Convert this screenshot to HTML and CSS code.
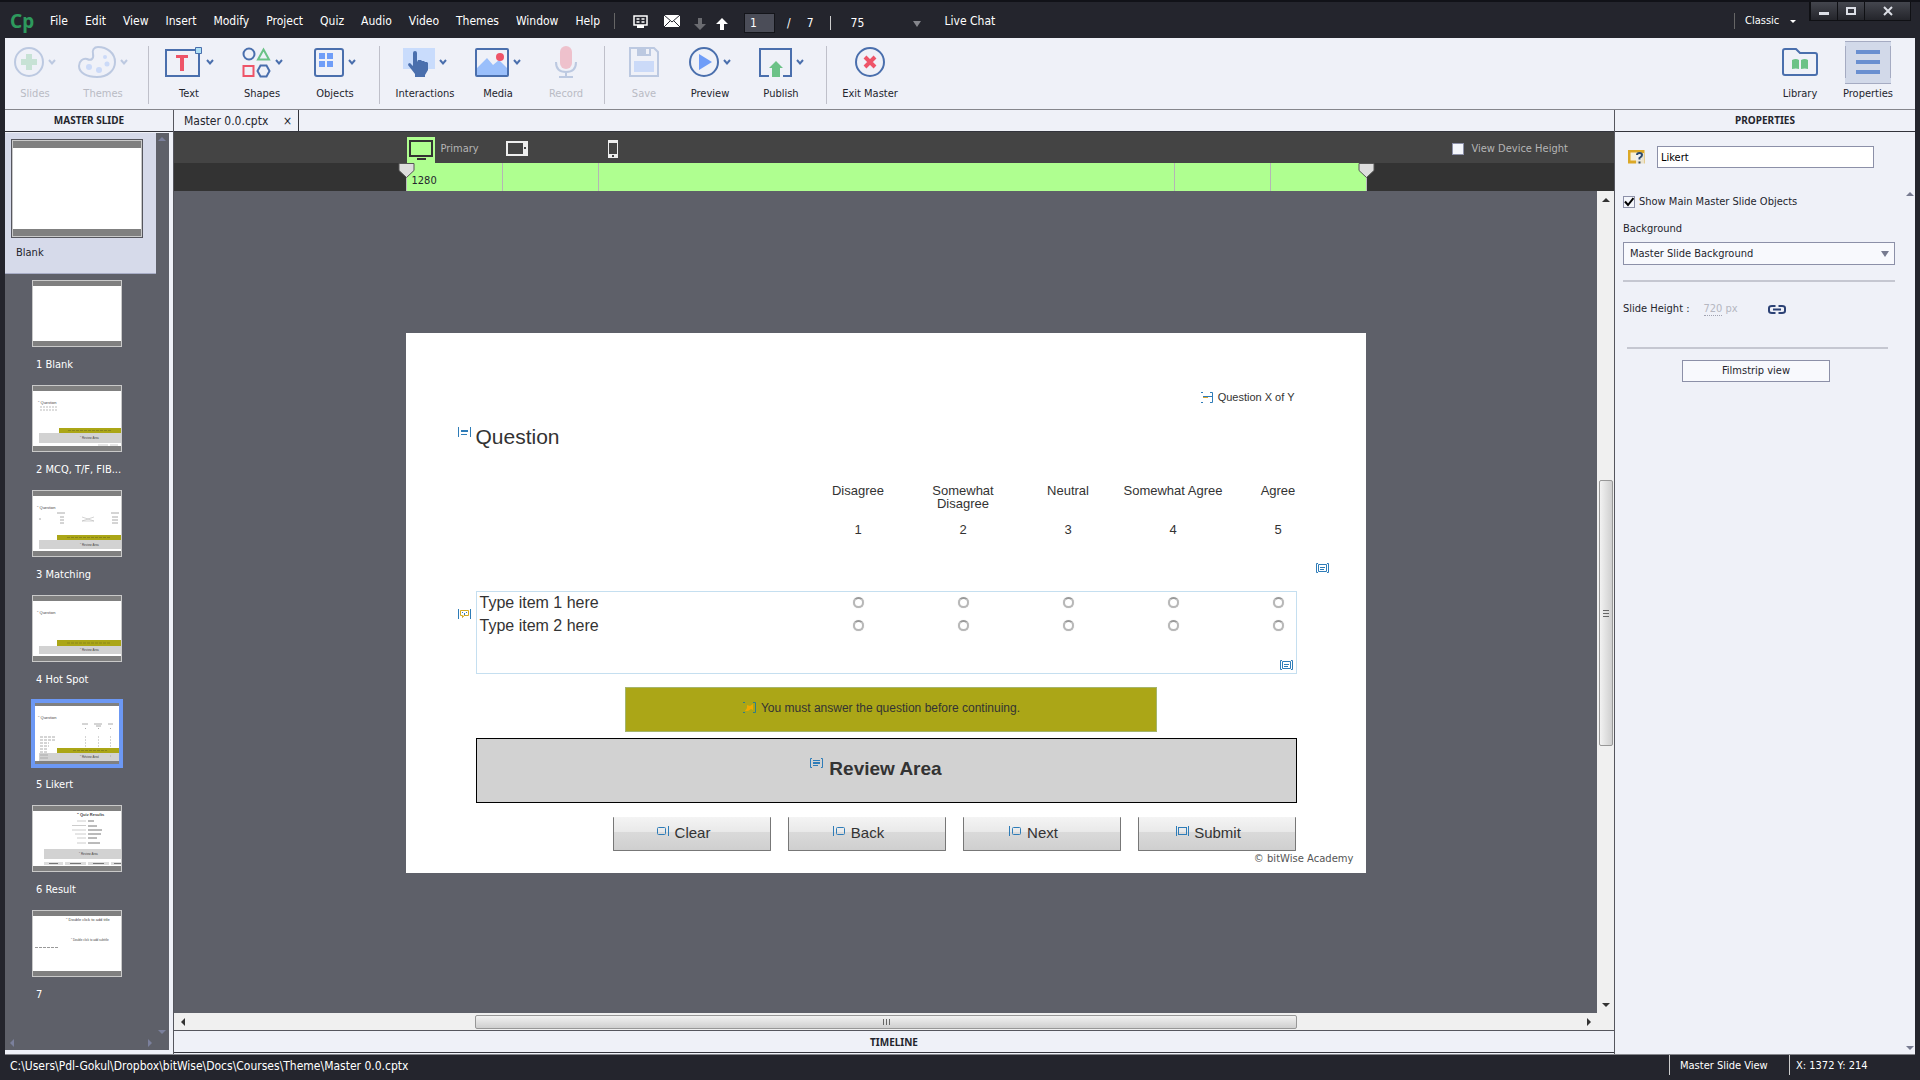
FILE: index.html
```html
<!DOCTYPE html>
<html lang="en">
<head>
    <meta charset="UTF-8">
    <meta name="viewport" content="width=device-width, initial-scale=1.0">
    <title>Master 0.0.cptx</title>
    <link rel="stylesheet" href="styles.css">
</head>
<body>
    <!-- shared icons -->
    <svg class="sprite" aria-hidden="true">
        <symbol id="caret" viewBox="0 0 8 8"><path d="M1 2l3 3.4L7 2" fill="none" stroke="#4a6fad" stroke-width="2"/></symbol>
        <symbol id="marker" viewBox="0 0 17 28"><path d="M8.500 14V28" stroke="#bbb"/><path d="M1 .5h15v7l-7.500 7L1 7.500z" fill="#ddd" stroke="#555"/></symbol>
        <symbol id="caption" viewBox="0 0 13 10"><path d="M.5 0v10M12.500 0v10M3 3.500h7M3 4.500h7M3 7.500h6" fill="none" stroke="#2e7cb8"/></symbol>
        <symbol id="caption-box" viewBox="0 0 13 10"><path d="M2 .5H.5v9H2M11 .5h1.500v9H11M2.500 1.500h8v7h-8zM4 4.500h5M4 6.500h4" fill="none" stroke="#2e7cb8"/></symbol>
    </svg>

    <header class="menubar">
        <span class="logo">Cp</span>
        <nav class="menu">
            <a href="#">File</a>
            <a href="#">Edit</a>
            <a href="#">View</a>
            <a href="#">Insert</a>
            <a href="#">Modify</a>
            <a href="#">Project</a>
            <a href="#">Quiz</a>
            <a href="#">Audio</a>
            <a href="#">Video</a>
            <a href="#">Themes</a>
            <a href="#">Window</a>
            <a href="#">Help</a>
        </nav>
        <div class="quick">
            <button class="bare" aria-label="Layout"><svg width="15" height="13"><path d="M1 1h13v9H1zM3.500 4h3M8.500 4h3M3.500 7h3M8.500 7h3" fill="none" stroke="#fff" stroke-width="1.500"/><path d="M4 10h7v3H4z" fill="#fff"/></svg></button>
            <button class="bare" aria-label="Mail"><svg width="16" height="12"><path d="M0 0h16v12H0z" fill="#fff"/><path d="M0 0l8 7 8-7M0 12l6-6M16 12l-6-6" fill="none" stroke="#24252d"/></svg></button>
            <div class="arrows">
                <button class="bare" aria-label="Next slide"><svg width="12" height="12"><path d="M4 0h4v6h4l-6 6-6-6h4z" fill="#6a6b70"/></svg></button>
                <button class="bare" aria-label="Previous slide"><svg width="12" height="12"><path d="M4 12h4V6h4L6 0 0 6h4z" fill="#fff"/></svg></button>
            </div>
            <input class="page-box" type="text" value="1" aria-label="Slide number">
            <span class="slash">/</span>
            <span class="total">7</span>
            <span class="pipe"></span>
            <span class="zoom-box">
                <select aria-label="Zoom"><option>75</option></select>
            </span>
            <a href="#">Live Chat</a>
        </div>
        <div class="workspace">
            <select aria-label="Workspace"><option>Classic</option></select>
        </div>
        <div class="window-buttons">
            <button aria-label="Minimize"><svg width="10" height="12"><path d="M0 7h10v3H0z" fill="#dcdfe6"/></svg></button>
            <button aria-label="Maximize"><svg width="10" height="12"><path d="M1 3h8v6H1z" fill="none" stroke="#dcdfe6" stroke-width="2"/></svg></button>
            <button class="close" aria-label="Close"><svg width="10" height="12"><path d="M1 2l8 8M9 2l-8 8" stroke="#dcdfe6" stroke-width="2"/></svg></button>
        </div>
    </header>

    <div class="toolbar">
        <div class="group">
            <button class="tool narrow" disabled>
                <span class="icons">
                    <svg width="30" height="32"><circle cx="15" cy="16" r="14" fill="none" stroke="#4a6fad" stroke-width="2"/><path d="M12 8h6v5h5v6h-5v5h-6v-5H7v-6h5z" fill="#6cc287"/></svg>
                    <svg class="caret"><use href="#caret"/></svg>
                </span>
                Slides
            </button>
            <button class="tool" disabled>
                <span class="icons">
                    <svg width="38" height="32"><path d="M15 8c-1-4 1-7 5-7 9 0 17 6 17 15s-8 15-18 15S1 27 1 20c0-5 4-8 8-7 4 2 7 0 6-5z" fill="none" stroke="#4a6fad" stroke-width="2"/><circle cx="11" cy="21" r="3" fill="#7ba6fb"/><circle cx="21" cy="24" r="3" fill="#7ba6fb"/><circle cx="29" cy="18" r="2.500" fill="#7ba6fb"/><circle cx="27" cy="11" r="2" fill="#7ba6fb"/></svg>
                    <svg class="caret"><use href="#caret"/></svg>
                </span>
                Themes
            </button>
        </div>
        <div class="group group-insert">
            <button class="tool">
                <span class="icons">
                    <svg width="37" height="32"><path d="M1 4h33v26H1z" fill="none" stroke="#4a6fad" stroke-width="2"/><path d="M11 9h12v3h-4v13h-4V12h-4z" fill="#ee5468"/><path d="M30.500 1.500h6v6h-6z" fill="#aee0f5" stroke="#4a6fad"/></svg>
                    <svg class="caret"><use href="#caret"/></svg>
                </span>
                Text
            </button>
            <button class="tool">
                <span class="icons">
                    <svg width="29" height="32" fill="none" stroke-width="2"><circle cx="7" cy="8" r="5.500" stroke="#4a6fad"/><path d="M21.500 3.500l5.500 10H16z" stroke="#6cc287"/><path d="M1.500 20h10v10h-10z" stroke="#ee5468"/><path d="M18.500 19.500h6l3 5.500-3 5.500h-6l-3-5.500z" stroke="#4a6fad"/></svg>
                    <svg class="caret"><use href="#caret"/></svg>
                </span>
                Shapes
            </button>
            <button class="tool">
                <span class="icons">
                    <svg width="30" height="32"><rect x="1" y="3" width="28" height="27" rx="2" fill="none" stroke="#4a6fad" stroke-width="2"/><path d="M5 7h6v6H5zM13 7h6v6h-6zM5 15h6v6H5zM13 15h6v6h-6z" fill="#6f9df8"/></svg>
                    <svg class="caret"><use href="#caret"/></svg>
                </span>
                Objects
            </button>
        </div>
        <div class="group group-media">
            <button class="tool">
                <span class="icons">
                    <svg width="32" height="32"><path d="M0 2h32v21H0z" fill="#c9dcfc"/><path d="M10 7q0-2 2-2t2 2v9l1-2h3l1 1h2l1 1h2l1 1v7l-3 5v2H12v-3l-7-9q0-2 2-2l3 3z" fill="#4a6fad"/></svg>
                    <svg class="caret"><use href="#caret"/></svg>
                </span>
                Interactions
            </button>
            <button class="tool">
                <span class="icons">
                    <svg width="34" height="32"><path d="M2 29V22l10-10 6 7 6-5 8 8v7z" fill="#9abffb"/><rect x="1" y="3" width="32" height="27" rx="1" fill="none" stroke="#4a6fad" stroke-width="2"/><circle cx="25" cy="11" r="4" fill="#ee5468"/></svg>
                    <svg class="caret"><use href="#caret"/></svg>
                </span>
                Media
            </button>
            <button class="tool narrow" disabled>
                <span class="icons">
                    <svg width="22" height="32"><rect x="5" y="0" width="12" height="23" rx="6" fill="#ee5468"/><path d="M1 16c0 7 4 10 10 10s10-3 10-10M11 26v5M4 31h14" fill="none" stroke="#4a6fad" stroke-width="2"/></svg>
                </span>
                Record
            </button>
        </div>
        <div class="group group-file">
            <button class="tool narrow" disabled>
                <span class="icons">
                    <svg width="30" height="32"><path d="M1 2h24l4 4v24H1z" fill="none" stroke="#4a6fad" stroke-width="2"/><path d="M8 2h14v8H8z" fill="#4a6fad"/><path d="M17 3h3v5h-3z" fill="#eff1f8"/><path d="M5 15h20v11H5z" fill="#7ba6fb"/></svg>
                </span>
                Save
            </button>
            <button class="tool">
                <span class="icons">
                    <svg width="30" height="32"><circle cx="15" cy="16" r="14" fill="none" stroke="#4a6fad" stroke-width="2"/><path d="M10 8l13 8-13 8z" fill="#6f9df8"/></svg>
                    <svg class="caret"><use href="#caret"/></svg>
                </span>
                Preview
            </button>
            <button class="tool">
                <span class="icons">
                    <svg width="33" height="32"><path d="M10 30H1V3h31v27h-8" fill="none" stroke="#4a6fad" stroke-width="2"/><path d="M13 31V22H10l7-7 7 7h-3v9z" fill="#6cc287"/></svg>
                    <svg class="caret"><use href="#caret"/></svg>
                </span>
                Publish
            </button>
        </div>
        <div class="group group-exit">
            <button class="tool">
                <span class="icons">
                    <svg width="30" height="32"><circle cx="15" cy="16" r="14" fill="none" stroke="#4a6fad" stroke-width="2"/><path d="M10 11l10 10M20 11L10 21" stroke="#ee5468" stroke-width="4"/></svg>
                </span>
                Exit Master
            </button>
        </div>
        <div class="group group-panels">
            <button class="tool narrow">
                <span class="icons">
                    <svg width="36" height="32"><path d="M3 3h11l4 4h15q2 0 2 2v18q0 2-2 2H3q-2 0-2-2V5q0-2 2-2z" fill="none" stroke="#4a6fad" stroke-width="2"/><path d="M10 14q4-2 7 0v9q-3-1-7 0zM19 14q4-2 7 0v9q-3-1-7 0z" fill="#6cc287"/></svg>
                </span>
                Library
            </button>
            <button class="tool">
                <span class="icons active">
                    <svg width="26" height="32"><path d="M1 6h24M1 16h24M1 26h24" stroke="#6a8fd0" stroke-width="4"/></svg>
                </span>
                Properties
            </button>
        </div>
    </div>

    <div class="main">
        <aside class="filmstrip">
            <h2 class="panel-title">MASTER SLIDE</h2>
            <div class="strip">
                <div class="master">
                    <div class="thumb"></div>
                    <span class="name">Blank</span>
                </div>
                <ol class="slides">
                    <li>
                        <div class="thumb"></div>
                        <span class="name">1 Blank</span>
                    </li>
                    <li>
                        <div class="thumb"><svg viewBox="0 0 88 55"><text x="5" y="13" font-size="4">" Question</text><path d="M7 16h17M7 19h17" stroke="#bbb" stroke-dasharray="2 1"/><path d="M26 37h62v5H26z" fill="#aba617"/><path d="M35 39.500h43" stroke="#8a861a" stroke-dasharray="3 1"/><path d="M6 42h82v10H6z" fill="#d2d2d2"/><text x="47" y="48" font-size="3">" Review Area</text><path d="M65 54h10M77 54h8" stroke="#ccc"/></svg></div>
                        <span class="name">2 MCQ, T/F, FIB...</span>
                    </li>
                    <li>
                        <div class="thumb"><svg viewBox="0 0 88 55"><text x="4" y="13" font-size="4">" Question</text><path d="M24 17h8M78 17h8M27 21h4M27 24h4M27 27h4M79 21h6M79 24h6M79 27h6M6 23h2" stroke="#aaa"/><path d="M49 21l12 4M49 25l12-4M49 25h12" stroke="#aaa" stroke-width=".5"/><path d="M24 39h64v5H24z" fill="#aba617"/><path d="M34 41.500h44" stroke="#8a861a" stroke-dasharray="3 1"/><path d="M6 44h82v9H6z" fill="#d2d2d2"/><text x="47" y="50" font-size="3">" Review Area</text></svg></div>
                        <span class="name">3 Matching</span>
                    </li>
                    <li>
                        <div class="thumb"><svg viewBox="0 0 88 55"><text x="4" y="13" font-size="4">" Question</text><path d="M24 39h64v6H24z" fill="#aba617"/><path d="M34 42h44" stroke="#8a861a" stroke-dasharray="3 1"/><path d="M6 45h82v8H6z" fill="#d2d2d2"/><text x="47" y="50" font-size="3">" Review Area</text></svg></div>
                        <span class="name">4 Hot Spot</span>
                    </li>
                    <li>
                        <div class="thumb current"><svg viewBox="0 0 88 55"><text x="5" y="13" font-size="4">" Question</text><path d="M49 18h6M61 18h8M63 20h5M75 18h5M52 22.500h1M65 22.500h1M77 22.500h1" stroke="#aaa"/><path d="M7 31h15M7 34h15M7 37h9M7 40h9M7 43h8M7 46h8" stroke="#aaa" stroke-dasharray="3 1"/><path d="M52 31h1M52 34h1M52 37h1M52 40h1M65 31h1M65 34h1M65 37h1M65 40h1M77 31h1M77 34h1M77 37h1M77 40h1" stroke="#aaa"/><path d="M24 42h64v5H24z" fill="#aba617"/><path d="M40 44.500h34" stroke="#8a861a" stroke-dasharray="3 1"/><path d="M6 47h82v8H6z" fill="#d2d2d2"/><path d="M7 49h8M7 52h8M52 50h1M65 50h1M77 50h1" stroke="#aaa"/><text x="47" y="52" font-size="3">" Review Area</text></svg></div>
                        <span class="name">5 Likert</span>
                    </li>
                    <li>
                        <div class="thumb"><svg viewBox="0 0 88 55"><text x="44" y="5" font-size="4" font-weight="bold">" Quiz Results</text><path d="M44 10h9M39 14.500h14M39 19h14M42 23h11M44 27h9M44 32h9" stroke="#ccc"/><path d="M55 10h6M55 15h9M55 19h14M55 23h13M55 27h9M55 32h12" stroke="#777"/><path d="M11 38h77v10H11z" fill="#d2d2d2"/><text x="46" y="44" font-size="3">" Review Area</text><path d="M11 51h19v3H11zM32 51h21v3H32zM55 51h21v3H55zM78 51h10v3H78z" fill="#ddd"/><path d="M16 52.500h9M37 52.500h11M60 52.500h11M81 52.500h7" stroke="#777"/></svg></div>
                        <span class="name">6 Result</span>
                    </li>
                    <li>
                        <div class="thumb"><svg viewBox="0 0 88 55"><text x="33" y="5" font-size="4">" Double click to add title</text><text x="38" y="25" font-size="3">" Double click to add subtitle</text><path d="M2 31.500h23" stroke="#999" stroke-dasharray="3 1"/></svg></div>
                        <span class="name">7</span>
                    </li>
                </ol>
                <span class="tri up strip-up"></span>
                <span class="tri down strip-down"></span>
                <span class="tri left strip-left"></span>
                <span class="tri right strip-right"></span>
            </div>
        </aside>

        <main class="center">
            <div class="tabs">
                <div class="tab">Master 0.0.cptx <button class="bare" aria-label="Close tab">×</button></div>
            </div>
            <div class="devices">
                <div class="device-list">
                    <button class="bare device-primary" aria-label="Desktop"><svg width="28" height="27"><path d="M3 4h22v15H3z" fill="none" stroke="#333" stroke-width="2"/><path d="M10 22h9" stroke="#333" stroke-width="2"/></svg></button>
                    <span class="device-name">Primary</span>
                    <button class="bare" aria-label="Tablet"><svg width="22" height="15"><path d="M1 1h20v13H1z" fill="none" stroke="#eee" stroke-width="2"/><path d="M17 0h5v15h-5z" fill="#eee"/><path d="M18 6h2v2h-2z" fill="#444"/></svg></button>
                    <button class="bare device-phone" aria-label="Phone"><svg width="10" height="18"><path d="M0 0h10v18H0z" fill="#eee"/><path d="M1 3h8v11H1zM4 15h2v2H4z" fill="#444"/></svg></button>
                </div>
                <label class="check device-height"><input type="checkbox"> View Device Height</label>
            </div>
            <div class="ruler">
                <div class="ruler-scale">
                    <span>1280</span><span></span><span></span><span></span><span></span>
                    <svg class="marker marker-start"><use href="#marker"/></svg>
                    <svg class="marker marker-end"><use href="#marker"/></svg>
                </div>
            </div>

            <div class="canvas">
                <div class="stage">
                    <article class="slide">
                        <p class="progress"><svg width="12" height="11"><path d="M2 .5H0M2 10.500H0M9 .5h2.500v10H9M2 4.500h9" fill="none" stroke="#2e7cb8"/><path d="M2 5.500h5" stroke="#e0a82e"/></svg> Question X of Y</p>
                        <h1 class="question"><svg class="badge badge-question"><use href="#caption"/></svg>Question</h1>
                        <div class="likert">
                            <svg class="badge badge-correct"><use href="#caption-box"/></svg>
                            <svg class="badge badge-smile" viewBox="0 0 13 10"><path d="M.5 0v10M12.500 0v10" stroke="#2e7cb8"/><path d="M2.500 1.500h8v5H6L4.500 8.500v-2h-2z" fill="none" stroke="#d2a921"/><path d="M4 3h1v1H4zM8 3h1v1H8zM6 4h1v2H6z" fill="#2e7cb8"/></svg>
                            <div class="likert-frame"><svg class="badge badge-hint"><use href="#caption-box"/></svg></div>
                            <table>
                                <thead>
                                    <tr class="labels">
                                        <th></th>
                                        <th scope="col">Disagree</th>
                                        <th scope="col">Somewhat<br>Disagree</th>
                                        <th scope="col">Neutral</th>
                                        <th scope="col">Somewhat Agree</th>
                                        <th scope="col">Agree</th>
                                    </tr>
                                    <tr class="scores">
                                        <td></td>
                                        <td>1</td>
                                        <td>2</td>
                                        <td>3</td>
                                        <td>4</td>
                                        <td>5</td>
                                    </tr>
                                </thead>
                                <tbody>
                                    <tr>
                                        <th scope="row">Type item 1 here</th>
                                        <td><input type="radio" name="item1" aria-label="Item 1: Disagree"></td>
                                        <td><input type="radio" name="item1" aria-label="Item 1: Somewhat Disagree"></td>
                                        <td><input type="radio" name="item1" aria-label="Item 1: Neutral"></td>
                                        <td><input type="radio" name="item1" aria-label="Item 1: Somewhat Agree"></td>
                                        <td><input type="radio" name="item1" aria-label="Item 1: Agree"></td>
                                    </tr>
                                    <tr>
                                        <th scope="row">Type item 2 here</th>
                                        <td><input type="radio" name="item2" aria-label="Item 2: Disagree"></td>
                                        <td><input type="radio" name="item2" aria-label="Item 2: Somewhat Disagree"></td>
                                        <td><input type="radio" name="item2" aria-label="Item 2: Neutral"></td>
                                        <td><input type="radio" name="item2" aria-label="Item 2: Somewhat Agree"></td>
                                        <td><input type="radio" name="item2" aria-label="Item 2: Agree"></td>
                                    </tr>
                                </tbody>
                            </table>
                        </div>
                        <p class="warning"><svg width="13" height="11"><path d="M2 .5H0M2 10.500H0M10 .5h2.500v10H10" fill="none" stroke="#2e7c88"/><path d="M2 9l2-3V3l3 1 3-2v6L8 7 5 9z" fill="#f0a800"/></svg> You must answer the question before continuing.</p>
                        <div class="review"><svg width="13" height="10"><path d="M2 .5H.5v9H2M11 .5h1.500v9H11M3 2.500h7M3 4.500h7M3 5.500h7M3 7.500h5" fill="none" stroke="#2e7cb8"/></svg> Review Area</div>
                        <div class="buttons">
                            <button><svg width="13" height="10"><rect x=".5" y="1.500" width="8" height="7" rx="1" fill="none" stroke="#2e7cb8"/><path d="M11.500 0v10" stroke="#2e7cb8"/></svg> Clear</button>
                            <button><svg width="13" height="10"><rect x="3.500" y="1.500" width="8" height="7" rx="1" fill="none" stroke="#2e7cb8"/><path d="M.5 0v10" stroke="#2e7cb8"/></svg> Back</button>
                            <button><svg width="13" height="10"><rect x="3.500" y="1.500" width="8" height="7" rx="1" fill="none" stroke="#2e7cb8"/><path d="M.5 0v10" stroke="#2e7cb8"/></svg> Next</button>
                            <button><svg width="13" height="10"><rect x="2.500" y="1.500" width="8" height="7" fill="none" stroke="#2e7cb8"/><path d="M.5 0v10M12.500 0v10" stroke="#2e7cb8"/></svg> Submit</button>
                        </div>
                        <p class="copyright">© bitWise Academy</p>
                    </article>
                </div>
                <div class="scroll-y">
                    <span class="tri up"></span>
                    <span class="thumb-y"></span>
                    <span class="tri down"></span>
                </div>
                <div class="scroll-x">
                    <span class="tri left"></span>
                    <span class="thumb-x"></span>
                    <span class="tri right"></span>
                </div>
            </div>
            <h2 class="panel-title timeline">TIMELINE</h2>
        </main>

        <aside class="properties">
            <h2 class="panel-title">PROPERTIES</h2>
            <form class="props">
                <div class="name-row">
                    <svg width="17" height="14"><path d="M1 1h14v11H1z" fill="#f6f1dc" stroke="#dba827" stroke-width="3"/><path d="M8 3h8v11H8z" fill="#eff1f8" fill-opacity=".8"/><path d="M9 5q0-2 2.500-2t2.500 2q0 1.500-2.500 3v1.500M11.500 11.500v2" fill="none" stroke="#2c4a6c" stroke-width="2"/></svg>
                    <input class="slide-name" type="text" value="Likert" aria-label="Slide name">
                </div>
                <label class="check"><input type="checkbox" checked> Show Main Master Slide Objects</label>
                <label class="field-label" for="background">Background</label>
                <div class="select-box">
                    <select id="background"><option>Master Slide Background</option></select>
                </div>
                <hr>
                <div class="height-row">
                    <span>Slide Height :</span>
                    <span class="px"><u>720</u> px</span>
                    <button type="button" class="bare" aria-label="Link"><svg width="18" height="9"><path d="M7.500 1H4Q1 1 1 3v3q0 2 3 2h3.500M10.500 1H14q3 0 3 2v3q0 2-3 2h-3.500M5 4.500h8" fill="none" stroke="#2c4275" stroke-width="2"/></svg></button>
                </div>
                <hr class="short">
                <button type="button" class="filmstrip-btn">Filmstrip view</button>
                <span class="tri up props-up"></span>
                <span class="tri down props-down"></span>
            </form>
        </aside>
    </div>

    <footer class="status">
        <span class="path">C:\Users\Pdl-Gokul\Dropbox\bitWise\Docs\Courses\Theme\Master 0.0.cptx</span>
        <span class="mode">Master Slide View</span>
        <span class="coords">X: 1372 Y: 214</span>
    </footer>
</body>
</html>
```
FILE: styles.css
```css
* {
    box-sizing: border-box;
}
body {
    margin: 0;
    min-height: 100vh;
    display: flex;
    flex-direction: column;
    background-color: #24252d;
    color: #24252d;
    font-family: "DejaVu Sans Condensed", "DejaVu Sans", sans-serif;
    font-size: 11px;
    line-height: 16px;
}
button, input, select {
    font: inherit;
    color: inherit;
    margin: 0;
}
h1, h2, p {
    margin: 0;
}
svg {
    flex: none;
    display: block;
}
select {
    appearance: none;
    background: none;
    border: none;
    padding: 0;
}
.sprite {
    position: absolute;
    width: 0;
    height: 0;
}
.bare {
    background: none;
    border: none;
    padding: 0;
}

/* small triangles */
.tri {
    width: 0;
    height: 0;
    border: 4px solid transparent;
    align-self: center;
    justify-self: center;
}
.tri.up {
    border-top: none;
    border-bottom-color: #333;
}
.tri.down {
    border-bottom: none;
    border-top-color: #333;
}
.tri.left {
    border-left: none;
    border-right-color: #333;
}
.tri.right {
    border-right: none;
    border-left-color: #333;
}

/* menu bar */
.menubar {
    display: flex;
    align-items: center;
    height: 38px;
    padding: 2px 9px 0 10px;
    border-top: 2px solid #111218;
    color: #fff;
    font-size: 12px;
}
.menubar a {
    color: #fff;
    text-decoration: none;
}
.logo {
    width: 40px;
    color: #2e9a5d;
    font-family: "Noto Sans", sans-serif;
    font-size: 19px;
    font-weight: bold;
}
.menu {
    display: flex;
    gap: 17px;
    padding-right: 14px;
    border-right: 1px solid #666;
}
.quick {
    display: flex;
    align-items: center;
    padding-left: 18px;
    gap: 16px;
}
.arrows {
    display: flex;
    gap: 10px;
    margin-left: -2px;
    padding-top: 6px;
}
.page-box {
    width: 31px;
    height: 20px;
    margin-top: 4px;
    padding: 0 5px;
    background-color: #4b4d58;
    border: 1px solid #14151a;
}
.slash, .total, .pipe, .zoom-box {
    margin-top: 4px;
}
.slash {
    margin-left: -4px;
}
.pipe {
    width: 1px;
    height: 14px;
    background-color: #ccc;
}
.zoom-box {
    position: relative;
    width: 70px;
    margin-right: 8px;
    margin-left: 4px;
}
.zoom-box select, .workspace select {
    width: 100%;
}
.zoom-box::after, .workspace::after, .select-box::after {
    content: "";
    position: absolute;
    right: 0;
    top: 6px;
    border: 4px solid transparent;
    border-top: 6px solid #85868c;
    border-bottom: none;
    pointer-events: none;
}
.workspace {
    position: relative;
    width: 62px;
    margin-left: auto;
    margin-right: 13px;
    padding-left: 10px;
    border-left: 1px solid #666;
    font-size: 11px;
}
.workspace::after {
    border-width: 3px 3px 0;
    border-top-color: #fff;
    top: 7px;
}
.window-buttons {
    display: flex;
    align-self: flex-start;
    margin-top: -2px;
    border: 1px solid #0f1014;
    border-top: none;
}
.window-buttons button {
    display: flex;
    align-items: center;
    justify-content: center;
    width: 27px;
    height: 18px;
    padding: 0;
    background: linear-gradient(#44464e, #24252b);
    border: none;
    border-left: 1px solid #0f1014;
}
.window-buttons .close {
    width: 46px;
}

/* toolbar */
.toolbar {
    display: flex;
    height: 72px;
    margin: 0 5px;
    padding: 8px 0 5px;
    background-color: #eff1f8;
    border-bottom: 1px solid #85868c;
}
.group {
    display: flex;
    gap: 3px;
    padding-right: 10px;
    border-right: 1px solid #bfc0ca;
}
.group-insert {
    padding: 0 9px 0 5px;
}
.group-media {
    padding: 0 8px 0 10px;
}
.group-file {
    gap: 1px;
    padding: 0 10px 0 9px;
}
.group-exit {
    padding-left: 8px;
    border: none;
}
.group-panels {
    margin-left: auto;
    padding-right: 12px;
    border: none;
}
.tool {
    display: flex;
    flex-direction: column;
    align-items: center;
    gap: 6px;
    width: 70px;
    padding: 0;
    background: none;
    border: none;
    white-space: nowrap;
}
.tool.narrow {
    width: 60px;
}
.tool:disabled {
    color: #b9bbc4;
}
.tool:disabled svg {
    opacity: 0.3;
}
.icons {
    display: flex;
    align-items: center;
    gap: 4px;
    height: 32px;
    margin-bottom: 2px;
}
.caret {
    width: 8px;
    height: 8px;
}
.icons.active {
    padding: 0 9px;
    background-color: #d2d9e9;
    border: solid #a5abc2;
    border-width: 0 1px;
    box-shadow: 0 -4px #d2d9e9, 0 5px #d2d9e9, 0 -5px #a5abc2, 0 6px #a5abc2;
}

/* panels */
.main {
    flex: 1;
    display: flex;
    margin: 0 5px;
    background-color: #eff1f8;
    border-bottom: 1px solid #85868c;
}
.panel-title {
    height: 22px;
    border-bottom: 1px solid #33343c;
    font-family: "Noto Sans", sans-serif;
    font-size: 10px;
    line-height: 21px;
    text-align: center;
}
.filmstrip {
    display: flex;
    flex-direction: column;
    width: 169px;
    padding-bottom: 4px;
    border-right: 1px solid #55565e;
}
.strip {
    flex: 1;
    position: relative;
    margin: 1px 4px 0 0;
    background-color: #5e6069;
}
.strip .tri {
    position: absolute;
}
.strip .tri.up { border-bottom-color: #7b809c; }
.strip .tri.down { border-top-color: #7b809c; }
.strip .tri.left { border-right-color: #7b809c; }
.strip .tri.right { border-left-color: #7b809c; }
.strip-up {
    top: 4px;
    right: 3px;
}
.strip-down {
    bottom: 16px;
    right: 3px;
}
.strip-left {
    bottom: 3px;
    left: 5px;
}
.strip-right {
    bottom: 3px;
    right: 17px;
}
.master {
    width: 151px;
    height: 141px;
    padding: 6px;
    background-color: #d6daea;
    border-bottom: 1px solid #a8adc6;
}
.thumb {
    width: 90px;
    height: 67px;
    background-color: #fff;
    border: 1px solid #c9c9c9;
    box-shadow: inset 0 5px #808080, inset 0 -5px #808080;
}
.thumb svg {
    width: 88px;
    height: 55px;
    margin-top: 5px;
    font-family: "Liberation Sans", sans-serif;
    fill: #444;
}
.thumb.current {
    outline: 4px solid #6c98f4;
    outline-offset: -3px;
}
.master .thumb {
    width: 132px;
    height: 99px;
    border-color: #55565e;
    box-shadow: inset 0 0 0 1px #c9c9c9, inset 0 8px #808080, inset 0 -8px #808080;
}
.master .name {
    display: block;
    margin: 7px 5px;
}
.slides {
    list-style: none;
    margin: 0;
    padding: 6px 27px 0;
    color: #fff;
}
.slides li {
    height: 105px;
}
.slides .name {
    display: block;
    margin: 10px 4px 0;
    white-space: nowrap;
}

/* centre */
.center {
    flex: 1;
    display: flex;
    flex-direction: column;
    min-width: 0;
    border-right: 1px solid #55565e;
}
.tabs {
    display: flex;
    height: 22px;
    border-bottom: 1px solid #33343c;
}
.tab {
    display: flex;
    justify-content: space-between;
    width: 125px;
    padding: 0 6px 0 10px;
    border-right: 1px solid #33343c;
    font-size: 12px;
    line-height: 22px;
}
.devices, .ruler {
    display: grid;
    grid-template-columns: 1fr 960px 1fr;
    padding-right: 17px;
    background-color: #444;
}
.devices {
    height: 31px;
    padding-top: 1px;
    align-items: center;
    color: #b5b5b5;
}
.device-list {
    grid-column: 2;
    display: flex;
    align-items: center;
    padding-left: 1px;
}
.device-primary {
    align-self: flex-end;
    height: 27px;
    margin-top: 4px;
    background-color: #afff90;
}
.device-name {
    width: 65px;
    margin-left: 6px;
}
.device-phone {
    margin-left: 80px;
}
.check {
    display: flex;
    align-items: center;
    gap: 4px;
}
.check input {
    appearance: none;
    width: 12px;
    height: 12px;
    background: #f4f6fb center / 10px no-repeat;
    border: 1px solid #8c90a8;
}
.check input:checked {
    background-image: url('data:image/svg+xml,<svg xmlns="http://www.w3.org/2000/svg" viewBox="0 0 10 10"><path d="M1 4.500L4 8 9.500 1" fill="none" stroke="black" stroke-width="2"/></svg>');
}
.device-height {
    gap: 8px;
    padding-left: 86px;
    white-space: nowrap;
}
.ruler {
    height: 28px;
    background-color: #333;
}
.ruler-scale {
    grid-column: 2;
    position: relative;
    display: grid;
    grid-template-columns: 96px 96px 1fr 96px 96px;
    background-color: #afff90;
}
.ruler-scale span {
    padding: 10px 0 0 5px;
    border-left: 1px solid #b5b5b5;
}
.marker {
    position: absolute;
    top: 0;
    width: 17px;
    height: 28px;
}
.marker-start {
    left: -8px;
}
.marker-end {
    right: -9px;
}
.canvas {
    flex: 1;
    display: grid;
    grid-template-columns: 1fr 17px;
    grid-template-rows: 1fr 17px;
    background-color: #f0f0f0;
}
.stage {
    display: flex;
    align-items: center;
    justify-content: center;
    padding-top: 2px;
    background-color: #5e6069;
}
.scroll-y {
    display: grid;
    grid-template-rows: 17px 272fr 266fr 250fr 17px;
    padding: 0 1px 0 2px;
}
.thumb-y {
    grid-row: 3;
    background: linear-gradient(#666, #666) center / 6px 1px no-repeat, linear-gradient(#666, #666) center calc(50% - 3px) / 6px 1px no-repeat, linear-gradient(#666, #666) center calc(50% + 3px) / 6px 1px no-repeat, linear-gradient(90deg, #f2f2f2, #cfcfcf);
    border: 1px solid #979797;
    border-radius: 2px;
}
.scroll-y .down {
    grid-row: 5;
}
.scroll-x {
    display: grid;
    grid-template-columns: 17px 284fr 822fr 283fr 17px;
    padding: 2px 0 1px;
}
.thumb-x {
    grid-column: 3;
    background: linear-gradient(#666, #666) center / 1px 6px no-repeat, linear-gradient(#666, #666) calc(50% - 3px) center / 1px 6px no-repeat, linear-gradient(#666, #666) calc(50% + 3px) center / 1px 6px no-repeat, linear-gradient(#f2f2f2, #cfcfcf);
    border: 1px solid #979797;
    border-radius: 2px;
}
.scroll-x .right {
    grid-column: 5;
}
.timeline {
    height: 23px;
    border-top: 1px solid #55565e;
    margin-bottom: 1px;
    line-height: 22px;
}

/* slide */
.slide {
    width: 960px;
    height: 540px;
    padding: 56px 69px 0 70px;
    background-color: #fff;
    color: #333;
    font-family: "Liberation Sans", Arial, sans-serif;
}
.badge {
    position: absolute;
    width: 13px;
    height: 10px;
}
.progress {
    display: flex;
    align-items: center;
    justify-content: flex-end;
    gap: 5px;
    font-size: 11px;
    padding-right: 2px;
}
.question {
    position: relative;
    margin-top: 20px;
    font-size: 21px;
    font-weight: normal;
    line-height: 24px;
}
.badge-question {
    left: -18px;
    top: 2px;
}
.likert {
    position: relative;
    margin-top: 35px;
    height: 190px;
}
.likert table {
    position: relative;
    width: calc(100% + 34px);
    table-layout: fixed;
    border-collapse: collapse;
    font-size: 13px;
    line-height: 13px;
    text-align: center;
}
.likert th, .likert td {
    width: 105px;
    padding: 0;
    font-weight: normal;
}
.likert th:first-child, .likert td:first-child {
    width: auto;
}
.labels {
    height: 39px;
    vertical-align: top;
}
.scores {
    height: 68px;
    vertical-align: top;
}
.likert tbody tr {
    height: 23px;
}
.likert tbody th {
    padding-left: 4px;
    font-size: 16px;
    line-height: 23px;
    text-align: left;
}
.likert input {
    appearance: none;
    display: block;
    width: 11px;
    height: 11px;
    margin: 0 auto;
    background-color: #fff;
    border: 2px solid #b8b8b8;
    border-top-color: #999;
    border-radius: 50%;
    box-shadow: 0 0 1px #ccc;
}
.likert-frame {
    position: absolute;
    left: 0;
    right: 0;
    bottom: 0;
    height: 83px;
    border: 1px solid #c5dff0;
}
.badge-correct {
    right: -32px;
    top: 79px;
}
.badge-smile {
    left: -18px;
    top: 125px;
}
.badge-hint {
    right: 3px;
    bottom: 3px;
}
.warning {
    display: flex;
    justify-content: center;
    gap: 5px;
    width: 532px;
    height: 45px;
    margin: 13px 0 0 149px;
    padding: 12px 18px 0 0;
    background-color: #aba617;
    border: 1px solid #a5b56c;
    font-size: 12px;
}
.warning svg {
    margin-top: 2px;
}
.review {
    display: flex;
    justify-content: center;
    gap: 6px;
    height: 65px;
    margin-top: 6px;
    padding: 19px 20px 0 0;
    background-color: #d2d2d2;
    border: 1px solid #000;
    font-size: 19px;
    font-weight: bold;
    line-height: 22px;
}
.buttons {
    display: flex;
    justify-content: flex-end;
    gap: 17px;
    margin-top: 14px;
    padding-right: 1px;
}
.buttons button {
    display: flex;
    justify-content: center;
    gap: 5px;
    width: 158px;
    height: 34px;
    padding: 7px 16px 0 0;
    background: linear-gradient(#f4f4f4, #e9e9e9 45%, #dadada 46%, #cfcfcf);
    border: 1px solid #777;
    border-top: none;
    border-radius: 1px;
    font-size: 15px;
    line-height: 18px;
}
.buttons svg {
    margin-top: 2px;
}
.copyright {
    margin-right: -57px;
    padding-top: 1px;
    color: #555;
    font-family: "DejaVu Sans", sans-serif;
    font-size: 10px;
    line-height: 14px;
    text-align: right;
}

/* properties */
.properties {
    display: flex;
    flex-direction: column;
    width: 300px;
}
.props {
    flex: 1;
    position: relative;
    display: flex;
    flex-direction: column;
    align-items: flex-start;
    padding: 14px 20px 0 8px;
}
.name-row {
    display: flex;
    align-items: center;
    gap: 12px;
    margin: 0 0 26px 5px;
}
.slide-name {
    width: 217px;
    height: 22px;
    padding: 0 3px;
    background-color: #fff;
    border: 1px solid #8c90a8;
    color: #000;
}
.field-label {
    margin: 11px 0 5px;
}
.select-box {
    position: relative;
    width: 100%;
    height: 23px;
    background-color: #f8f9fd;
    border: 1px solid #8c90a8;
}
.select-box select {
    width: 100%;
    height: 21px;
    padding: 0 6px;
}
.select-box::after {
    right: 5px;
    top: 8px;
    border-top-color: #777b90;
}
hr {
    width: 100%;
    height: 2px;
    margin: 15px 0;
    background-color: #c5c7d1;
    border: none;
}
.height-row {
    display: flex;
    align-items: center;
    margin: 4px 0 17px;
}
.px {
    margin: 0 30px 0 14px;
    color: #b5b7c1;
}
.px u {
    text-decoration: none;
    border-bottom: 1px dotted #a0a2b0;
}
hr.short {
    width: 261px;
    margin: 13px 0 11px 4px;
}
.filmstrip-btn {
    width: 148px;
    height: 22px;
    margin-left: 59px;
    padding: 0;
    background-color: #f8f9fd;
    border: 1px solid #8c90a8;
}
.props > .tri {
    position: absolute;
    right: 1px;
}
.props-up {
    top: 60px;
}
.props-down {
    bottom: 4px;
}
.props > .tri.up { border-bottom-color: #777b90; }
.props > .tri.down { border-top-color: #777b90; }

/* status bar */
.status {
    display: flex;
    height: 25px;
    padding: 0 5px 0 10px;
    color: #fff;
    line-height: 22px;
}
.path {
    flex: 1;
    font-size: 12px;
}
.mode, .coords {
    height: 20px;
    border-left: 1px solid #ccc;
}
.mode {
    width: 120px;
    padding-left: 10px;
}
.coords {
    width: 126px;
    padding-left: 6px;
}
```
